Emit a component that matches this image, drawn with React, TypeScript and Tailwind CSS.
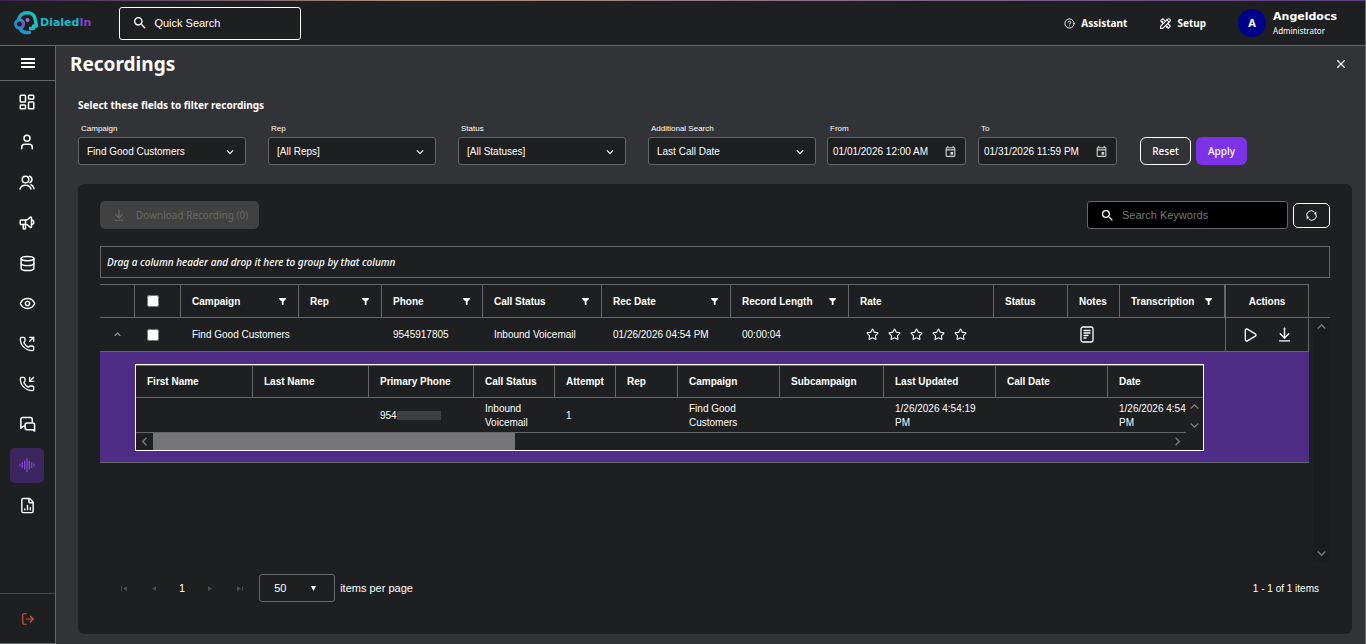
import type { ReactNode } from 'react'
import {
  ArrowDownToLine,
  CircleQuestionMark,
  Database,
  Eye,
  FileChartColumn,
  LayoutDashboard,
  LogOut,
  PhoneIncoming,
  PhoneOutgoing,
  Play,
  Star,
  User,
  X,
} from 'lucide-react'
import { MdKeyboardArrowDown, MdKeyboardArrowUp, MdOutlineEvent, MdSearch } from 'react-icons/md'
import { TbSpeakerphone, TbTools } from 'react-icons/tb'

const Logo = () => (
  <svg width="26" height="26" viewBox="0 0 26 26" fill="none" aria-hidden="true">
    <defs>
      <linearGradient id="head" x1="0" y1="16" x2="24" y2="8" gradientUnits="userSpaceOnUse">
        <stop stopColor="#2b7fd0" />
        <stop offset="0.6" stopColor="#1fb5c4" />
        <stop offset="1" stopColor="#12c9bd" />
      </linearGradient>
    </defs>
    <path
      d="M5.500 10C6.500 5 10 2.800 14.500 2.800C19.500 2.800 22 6 22.300 10L23.500 16H20.500V18.500H16"
      stroke="url(#head)"
      strokeWidth="3.5"
      strokeLinejoin="round"
    />
    <circle cx="6.500" cy="14" r="4" stroke="url(#head)" strokeWidth="3" />
    <path d="M6 11.500A3 3 0 0 1 6 17.500C9 18.500 11.500 17 11.500 14C11.500 11 9 10 6 11.500Z" fill="#8b3fe0" />
    <circle cx="14.500" cy="10" r="2" fill="#b565d8" />
    <path d="M7.500 19.500C9.500 22.500 12 23 16.500 22.500" stroke="#2094cc" strokeWidth="3.5" strokeLinecap="round" />
  </svg>
)

const MenuLines = () => (
  <svg width="14" height="12" viewBox="0 0 14 12" fill="currentColor">
    <path d="M0 1H14V3H0ZM0 5H14V7H0ZM0 9H14V11H0Z" />
  </svg>
)

const People = () => (
  <svg width="16" height="15" viewBox="0 0 16 15" fill="none" stroke="currentColor" strokeWidth="1.5" strokeLinecap="round">
    <circle cx="6.500" cy="4.500" r="3.300" />
    <path d="M10.300 1.300A3.300 3.300 0 0 1 10.800 7.600" />
    <path d="M1 14C1.800 11.300 4 10.300 6.500 10.300C9 10.300 11.200 11.300 12 14" />
    <path d="M12 9.800C13.500 10.500 14.600 11.800 15 13.700" />
  </svg>
)

const Chats = () => (
  <svg width="17" height="17" viewBox="0 0 18 18" fill="none" stroke="currentColor" strokeWidth="1.6" strokeLinejoin="round">
    <path d="M6.500 10.800H4.500L2 13V3.500A2 2 0 0 1 4 1.500H12A2 2 0 0 1 14 3.500V6.500" />
    <path d="M8.500 7.500H14.500A2 2 0 0 1 16.500 9.500V16L14.500 14.500H8.500A2 2 0 0 1 6.500 12.500V9.500A2 2 0 0 1 8.500 7.500Z" />
  </svg>
)

const Wave = () => (
  <svg width="16" height="16" viewBox="0 0 16 16" stroke="#8447dc" strokeWidth="1.2" strokeLinecap="round">
    <path d="M1 7V9M3.300 5.500V10.500M5.600 4V12M8 1.500V14.500M10.400 4V12M12.700 5.500V10.500M15 7V9" />
  </svg>
)

const Notes = () => (
  <svg width="14" height="17" viewBox="0 0 14 17" fill="none" stroke="currentColor" strokeWidth="1.3" strokeLinecap="round">
    <rect x="1" y="1" width="12" height="15" rx="2" />
    <path d="M4 4.500H10M4 7H10M4 9.500H8M4 12H6" />
  </svg>
)

const Refresh = () => (
  <svg width="11" height="11" viewBox="0 0 11 11" fill="none" stroke="currentColor" strokeWidth="1">
    <path d="M1.300 7.300A4.400 4.400 0 0 1 8.500 2.300" />
    <path d="M9.700 3.700A4.400 4.400 0 0 1 2.500 8.700" />
    <path d="M10.300 1.500V4.200H7.600ZM0.700 9.500V6.800H3.400Z" fill="currentColor" stroke="none" />
  </svg>
)

const Funnel = () => (
  <svg width="7" height="7" viewBox="0 0 7 7" fill="currentColor">
    <path d="M0 0H7V1L4.500 3.500V7H2.800V3.500L0 1Z" />
  </svg>
)

const nav: { label: string; icon: ReactNode; active?: boolean }[] = [
  { label: 'Dashboard', icon: <LayoutDashboard size={18} strokeWidth={2} /> },
  { label: 'Contact', icon: <User size={18} strokeWidth={2} /> },
  { label: 'Users', icon: <People /> },
  { label: 'Campaigns', icon: <TbSpeakerphone size={18} /> },
  { label: 'Data', icon: <Database size={17} strokeWidth={2} /> },
  { label: 'Monitor', icon: <Eye size={17} strokeWidth={2} /> },
  { label: 'Outbound', icon: <PhoneOutgoing size={16} strokeWidth={2} /> },
  { label: 'Inbound', icon: <PhoneIncoming size={16} strokeWidth={2} /> },
  { label: 'Messages', icon: <Chats /> },
  { label: 'Recordings', icon: <Wave />, active: true },
  { label: 'Reports', icon: <FileChartColumn size={17} strokeWidth={2} /> },
]

const selects = [
  { id: 'campaign', label: 'Campaign', value: 'Find Good Customers' },
  { id: 'rep', label: 'Rep', value: '[All Reps]' },
  { id: 'status', label: 'Status', value: '[All Statuses]' },
  { id: 'additional', label: 'Additional Search', value: 'Last Call Date' },
]

const dates = [
  { id: 'from', label: 'From', value: '01/01/2026 12:00 AM' },
  { id: 'to', label: 'To', value: '01/31/2026 11:59 PM' },
]

const columns = [
  { name: 'Campaign', filter: true },
  { name: 'Rep', filter: true },
  { name: 'Phone', filter: true },
  { name: 'Call Status', filter: true },
  { name: 'Rec Date', filter: true },
  { name: 'Record Length', filter: true },
  { name: 'Rate' },
  { name: 'Status' },
  { name: 'Notes' },
  { name: 'Transcription', filter: true },
]

const detailColumns = [
  'First Name',
  'Last Name',
  'Primary Phone',
  'Call Status',
  'Attempt',
  'Rep',
  'Campaign',
  'Subcampaign',
  'Last Updated',
  'Call Date',
  'Date',
]

const detailRow = ['', '', '954', 'Inbound Voicemail', '1', '', 'Find Good Customers', '', '1/26/2026 4:54:19 PM', '', '1/26/2026 4:54:19 PM']

const GridCols = () => (
  <colgroup>
    <col className="w-[35px]" />
    <col className="w-[46px]" />
    <col className="w-[118px]" />
    <col className="w-[83px]" />
    <col className="w-[101px]" />
    <col className="w-[119px]" />
    <col className="w-[129px]" />
    <col className="w-[118px]" />
    <col className="w-[145px]" />
    <col className="w-[74px]" />
    <col className="w-[52px]" />
    <col className="w-[106px]" />
    <col className="w-[83px]" />
  </colgroup>
)

const DetailCols = () => (
  <colgroup>
    <col className="w-[117px]" />
    <col className="w-[116px]" />
    <col className="w-[105px]" />
    <col className="w-[81px]" />
    <col className="w-[61px]" />
    <col className="w-[62px]" />
    <col className="w-[102px]" />
    <col className="w-[104px]" />
    <col className="w-[112px]" />
    <col className="w-[112px]" />
    <col className="w-[112px]" />
  </colgroup>
)

const Header = () => (
  <header className="flex h-[46px] shrink-0 flex-col border-b border-[#66676a] bg-[#1e1f20]">
    <div className="h-px bg-linear-to-r from-[#3b2352] via-[#b0957f] via-30% to-[#5d3f86]" />
    <div className="flex flex-1 items-center pr-7 pl-[13px] font-['Noto_Sans',sans-serif]">
      <a href="#" className="flex items-center font-['DejaVu_Sans',sans-serif] text-[11px] font-bold text-[#19b9c9]">
        <Logo />
        <span className="ml-px">
          Dialed<span className="text-[#8241d6]">In</span>
        </span>
      </a>
      <label className="ml-7 flex h-[33px] w-[182px] items-center rounded-[3px] border border-white pl-3">
        <MdSearch size={16} />
        <input
          type="text"
          aria-label="Quick Search"
          placeholder="Quick Search"
          className="ml-[6px] w-32 font-['Liberation_Sans',sans-serif] text-[11px] outline-none placeholder:text-white"
        />
      </label>
      <button className="ml-auto flex items-center gap-[6px] text-[10px] font-bold">
        <CircleQuestionMark size={11} strokeWidth={2} />
        Assistant
      </button>
      <button className="ml-8 flex items-center gap-[5px] text-[10px] font-bold">
        <TbTools size={13} />
        Setup
      </button>
      <button className="ml-8 flex items-center text-left">
        <span className="flex size-7 items-center justify-center rounded-full bg-[#00008b] text-[11px] font-bold">A</span>
        <span className="ml-[7px] flex flex-col">
          <span className="font-['DejaVu_Sans',sans-serif] text-[11px] leading-[14px] font-bold">Angeldocs</span>
          <span className="text-[8px] leading-[13px]">Administrator</span>
        </span>
      </button>
    </div>
  </header>
)

const Sidebar = () => (
  <aside className="flex w-14 shrink-0 flex-col border-r border-b border-[#66676a] bg-[#1e1f20]">
    <button aria-label="Menu" className="flex h-[35px] shrink-0 items-center justify-center border-b border-[#66676a]">
      <MenuLines />
    </button>
    <nav className="flex flex-1 flex-col items-center justify-between pt-[3px] pr-px pb-[70px]">
      {nav.map((item) => (
        <a
          key={item.label}
          href="#"
          aria-label={item.label}
          className={
            item.active
              ? 'flex h-[35px] w-[34px] items-center justify-center rounded-[5px] bg-[#3c2660]'
              : 'flex h-[35px] w-[34px] items-center justify-center'
          }
        >
          {item.icon}
        </a>
      ))}
    </nav>
    <button
      aria-label="Log out"
      className="flex h-[50px] shrink-0 items-center justify-center border-t border-[#4a4b4d] text-[#d9573f]"
    >
      <LogOut size={14} strokeWidth={2} />
    </button>
  </aside>
)

const Filters = () => (
  <form className="flex items-end pl-[22px]">
    <div className="flex gap-[22px]">
      {selects.map((s) => (
        <div key={s.id} className="flex w-[168px] flex-col">
          <label htmlFor={s.id} className="pl-[3px] text-[8px] leading-4">
            {s.label}
          </label>
          <div className="relative">
            <select
              id={s.id}
              className="h-7 w-full appearance-none rounded-[3px] border border-[#66676a] bg-[#1e1f20] pl-2 text-[10px] outline-none"
            >
              <option>{s.value}</option>
            </select>
            <MdKeyboardArrowDown size={14} className="pointer-events-none absolute top-2 right-[9px]" />
          </div>
        </div>
      ))}
    </div>
    <div className="ml-[11px] flex gap-3">
      {dates.map((d) => (
        <div key={d.id} className="flex w-[139px] flex-col">
          <label htmlFor={d.id} className="pl-[3px] text-[8px] leading-4">
            {d.label}
          </label>
          <div className="flex h-7 items-center rounded-[3px] border border-[#66676a] bg-[#1e1f20]">
            <input id={d.id} type="text" defaultValue={d.value} className="w-[108px] pl-[5px] text-[10px] outline-none" />
            <button type="button" aria-label="Open calendar" className="flex flex-1 justify-center text-[#d0d0d0]">
              <MdOutlineEvent size={13} />
            </button>
          </div>
        </div>
      ))}
    </div>
    <div className="ml-[23px] flex gap-[5px] font-['Noto_Sans',sans-serif] text-[10px] font-medium">
      <button type="button" className="h-7 w-[51px] rounded-[6px] border border-white">
        Reset
      </button>
      <button type="button" className="h-7 w-[51px] rounded-[6px] bg-[#7c33e8]">
        Apply
      </button>
    </div>
  </form>
)

const DetailGrid = () => (
  <div className="mr-[105px] ml-[35px] border border-white bg-[#1e1f20]">
    <div className="h-[33px] overflow-hidden border-y border-[#66676a]">
      <table className="w-[1084px] table-fixed border-separate border-spacing-0 text-left">
        <DetailCols />
        <thead>
          <tr className="h-[31px]">
            {detailColumns.map((name) => (
              <th key={name} className="border-r border-[#66676a] pl-[11px] font-bold whitespace-nowrap">
                {name}
              </th>
            ))}
          </tr>
        </thead>
      </table>
    </div>
    <div className="flex">
      <div className="min-w-0 flex-1">
        <div className="h-[35px] overflow-hidden border-b border-[#66676a]">
          <table className="w-[1084px] table-fixed border-separate border-spacing-0">
            <DetailCols />
            <tbody>
              <tr className="h-[35px]">
                {detailRow.map((value, i) => (
                  <td key={i} className="px-[11px] leading-[14px]">
                    {value === '954' ? (
                      <span className="flex items-center">
                        954
                        <span className="h-[9px] w-11 bg-[#3f3f3f]" />
                      </span>
                    ) : (
                      value
                    )}
                  </td>
                ))}
              </tr>
            </tbody>
          </table>
        </div>
        <div className="flex h-[17px] items-center text-[#77787a]">
          <span className="flex w-[17px] justify-center">
            <MdKeyboardArrowUp size={17} className="-rotate-90" />
          </span>
          <span className="h-full w-[362px] bg-[#757578]" />
          <MdKeyboardArrowDown size={17} className="ml-auto -rotate-90" />
        </div>
      </div>
      <div className="flex h-9 w-[17px] flex-col items-center justify-between text-[#77787a]">
        <MdKeyboardArrowUp size={17} />
        <MdKeyboardArrowDown size={17} />
      </div>
    </div>
  </div>
)

const Grid = () => (
  <div className="mt-[6px] flex flex-1 flex-col text-[10px]">
    <div className="border-b border-[#66676a] pr-[21px]">
      <table className="w-full table-fixed border-separate border-spacing-0 border-t border-[#66676a] text-left">
        <GridCols />
        <thead>
          <tr className="h-8">
            <th className="border-r border-[#66676a]" />
            <th className="border-r border-[#66676a]">
              <input type="checkbox" aria-label="Select all" className="ml-3 block size-3" />
            </th>
            {columns.map((c) => (
              <th
                key={c.name}
                className="border-r border-[#66676a] pr-3 pl-[11px] font-bold whitespace-nowrap nth-[12]:border-r-2"
              >
                <span className="flex items-center justify-between">
                  {c.name}
                  {c.filter && (
                    <button aria-label={`Filter ${c.name}`}>
                      <Funnel />
                    </button>
                  )}
                </span>
              </th>
            ))}
            <th className="border-r border-[#66676a] text-center font-bold">Actions</th>
          </tr>
        </thead>
      </table>
    </div>
    <div className="flex h-[244px]">
      <div className="mr-1 min-w-0 flex-1">
        <table className="w-full table-fixed border-separate border-spacing-0">
          <GridCols />
          <tbody>
            <tr className="h-[34px] *:border-b *:border-[#66676a]">
              <td>
                <button aria-label="Collapse row" className="mx-auto block text-[#a0a0a0]">
                  <MdKeyboardArrowUp size={13} />
                </button>
              </td>
              <td>
                <input type="checkbox" aria-label="Select row" className="ml-3 block size-3" />
              </td>
              <td className="pl-[11px] whitespace-nowrap">Find Good Customers</td>
              <td />
              <td className="pl-[11px]">9545917805</td>
              <td className="pl-[11px]">Inbound Voicemail</td>
              <td className="pl-[11px]">01/26/2026 04:54 PM</td>
              <td className="pl-[11px]">00:00:04</td>
              <td className="pl-[17px]">
                <span className="flex gap-[9px]">
                  {[1, 2, 3, 4, 5].map((n) => (
                    <button key={n} aria-label={`Rate ${n}`}>
                      <Star size={13} strokeWidth={2} />
                    </button>
                  ))}
                </span>
              </td>
              <td />
              <td className="pl-3">
                <button aria-label="Notes" className="block">
                  <Notes />
                </button>
              </td>
              <td className="border-r" />
              <td className="border-r">
                <span className="flex items-center justify-center gap-[18px]">
                  <button aria-label="Play">
                    <Play size={16} strokeWidth={2} />
                  </button>
                  <button aria-label="Download">
                    <ArrowDownToLine size={17} strokeWidth={2} />
                  </button>
                </span>
              </td>
            </tr>
            <tr className="bg-[#4f2c86]">
              <td colSpan={13} className="border-b border-[#66676a] pt-3 pb-[11px]">
                <DetailGrid />
              </td>
            </tr>
          </tbody>
        </table>
      </div>
      <div className="flex w-[17px] flex-col items-center justify-between bg-[#1b1c1f] text-[#77787a]">
        <MdKeyboardArrowUp size={17} />
        <MdKeyboardArrowDown size={17} />
      </div>
    </div>
  </div>
)

const Pager = () => (
  <div className="mb-8 flex h-7 items-center pr-[11px] pl-[21px] text-[11px]">
    <div className="flex items-center gap-[22px] text-[#4a4b4d]">
      <button aria-label="First page">
        <svg width="7" height="7" viewBox="0 0 7 7" fill="currentColor">
          <path d="M0 1H1V6H0ZM6 1V6L2 3.500Z" />
        </svg>
      </button>
      <button aria-label="Previous page">
        <svg width="7" height="7" viewBox="0 0 7 7" fill="currentColor">
          <path d="M6 1V6L2 3.500Z" />
        </svg>
      </button>
      <span className="text-white">1</span>
      <button aria-label="Next page">
        <svg width="7" height="7" viewBox="0 0 7 7" fill="currentColor">
          <path d="M1 1V6L5 3.500Z" />
        </svg>
      </button>
      <button aria-label="Last page">
        <svg width="7" height="7" viewBox="0 0 7 7" fill="currentColor">
          <path d="M6 1H7V6H6ZM1 1V6L5 3.500Z" />
        </svg>
      </button>
    </div>
    <div className="relative ml-4">
      <select
        id="page-size"
        className="h-7 w-[76px] appearance-none rounded-[3px] border border-[#66676a] bg-[#1e1f20] pl-[14px] outline-none"
      >
        <option>50</option>
      </select>
      <svg width="5" height="5" viewBox="0 0 5 5" fill="currentColor" className="pointer-events-none absolute top-3 right-[19px]">
        <path d="M0 0H5L2.500 5Z" />
      </svg>
    </div>
    <label htmlFor="page-size" className="ml-[5px]">
      items per page
    </label>
    <span className="ml-auto text-[10px]">1 - 1 of 1 items</span>
  </div>
)

export default function App() {
  return (
    <div className="flex min-h-screen flex-col border-r border-[#66676a] bg-[#323337] font-['Liberation_Sans',Arial,sans-serif] text-white">
      <Header />
      <div className="flex flex-1">
        <Sidebar />
        <main className="flex min-w-0 flex-1 flex-col">
          <div className="flex h-9 items-center justify-between pr-[17px] pl-[14px]">
            <h1 className="font-['Noto_Sans',sans-serif] text-[19px] leading-6 font-bold">Recordings</h1>
            <button aria-label="Close">
              <X size={14} strokeWidth={2} />
            </button>
          </div>
          <h2 className="mt-[15px] pl-[22px] font-['Noto_Sans',sans-serif] text-[10px] leading-4 font-bold">
            Select these fields to filter recordings
          </h2>
          <div className="mt-2">
            <Filters />
          </div>
          <section className="mt-[19px] mr-[13px] mb-[10px] ml-[22px] flex flex-1 flex-col rounded-[6px] bg-[#1e1f20] pt-[17px] pr-[22px] pl-[22px]">
            <div className="flex items-center">
              <button
                disabled
                className="flex h-7 w-[159px] items-center gap-[10px] rounded-[5px] bg-[#414141] pl-3 font-['Noto_Sans',sans-serif] text-[10px] text-[#686868]"
              >
                <ArrowDownToLine size={14} strokeWidth={2} />
                Download Recording (0)
              </button>
              <label className="ml-auto flex h-7 w-[201px] items-center rounded-[3px] border border-[#66676a] bg-black pl-3">
                <MdSearch size={15} />
                <input
                  type="text"
                  aria-label="Search Keywords"
                  placeholder="Search Keywords"
                  className="ml-[7px] w-36 text-[11px] outline-none placeholder:text-[#77787a]"
                />
              </label>
              <button
                aria-label="Refresh"
                className="ml-[5px] flex h-[25px] w-[37px] items-center justify-center rounded-[5px] border border-white"
              >
                <Refresh />
              </button>
            </div>
            <p className="mt-[17px] flex h-8 items-center border border-[#66676a] pl-[6px] font-['Noto_Sans',sans-serif] text-[10px] font-medium italic">
              Drag a column header and drop it here to group by that column
            </p>
            <Grid />
            <Pager />
          </section>
        </main>
      </div>
    </div>
  )
}
